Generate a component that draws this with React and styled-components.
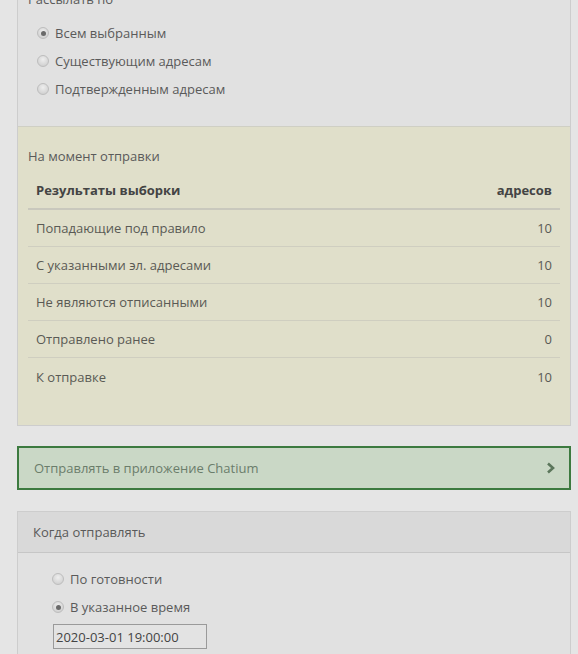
import React from 'react';
import styled, { createGlobalStyle } from 'styled-components';

const GlobalStyle = createGlobalStyle`
    html, body {
        margin: 0;
        padding: 0;
        background: #e5e5e5;
        font-family: "Open Sans", "Liberation Sans", sans-serif;
        font-size: 13px;
        color: #5a5a5a;
        overflow: hidden;
    }
`;

const Page = styled.div`
    width: 578px;
    height: 654px;
    box-sizing: border-box;
    padding: 0 7px 0 17px;
    overflow: hidden;
`;

const Panel = styled.div`
    border: 1px solid #cdcdcd;
    background: #e1e1e1;
    margin-top: ${props => props.top || 0}px;
`;

const Legend = styled.div`
    padding: 0 10px;
    line-height: 20px;
`;

const RadioList = styled.div`
    display: flex;
    flex-direction: column;
    align-items: flex-start;
    gap: 8px;
    padding: ${props => props.pad};
`;

const RadioRow = styled.label`
    display: flex;
    align-items: center;
    gap: 6px;
    line-height: 20px;
`;

const RadioDot = styled.span`
    width: 12px;
    height: 12px;
    border-radius: 50%;
    box-sizing: border-box;
    border: 1px solid #bdbdbd;
    background: radial-gradient(circle at 50% 35%, #eeeeee 0%, #c9c9c9 100%);
    display: flex;
    align-items: center;
    justify-content: center;

    &::after {
        content: '';
        width: 5px;
        height: 5px;
        border-radius: 50%;
        background: #6a6a6a;
        display: ${props => (props.checked ? 'block' : 'none')};
    }
`;

const Summary = styled.div`
    background: #e0dfca;
    border-top: 1px solid #cfcfc4;
    padding: 19px 10px 30px;
`;

const SummaryTitle = styled.div`
    line-height: 20px;
    margin-bottom: 5px;
`;

const Table = styled.div`
    display: flex;
    flex-direction: column;
`;

const Row = styled.div`
    display: flex;
    justify-content: space-between;
    align-items: center;
    box-sizing: border-box;
    height: ${props => (props.head ? 39 : 37)}px;
    padding: 0 8px;
    border-bottom: ${props => (props.head ? '2px solid #c9c8bd' : props.last ? 'none' : '1px solid #cfcec0')};
    font-weight: ${props => (props.head ? 700 : 400)};
    color: ${props => (props.head ? '#444' : '#5a5a55')};
`;

const AppButton = styled.div`
    margin-top: 20px;
    height: 40px;
    border: 2px solid #3c7a3f;
    background: #cad8c6;
    display: flex;
    align-items: center;
    justify-content: space-between;
    padding: 0 14px 0 15px;
    color: #6b7d6b;
`;

const PanelHeader = styled.div`
    background: #d9d9d9;
    border-bottom: 1px solid #c6c6c6;
    height: 40px;
    display: flex;
    align-items: center;
    padding: 0 15px;
`;

const DateInput = styled.input`
    width: 154px;
    height: 25px;
    box-sizing: border-box;
    border: 1px solid #9a9a9a;
    background: #e3e3e3;
    font-family: "Open Sans", "Liberation Sans", sans-serif;
    font-size: 13px;
    color: #444;
    padding: 0 2px;
    margin: -1px 0 0 1px;
    outline: none;
`;

const rows = [
    ['Попадающие под правило', 10],
    ['С указанными эл. адресами', 10],
    ['Не являются отписанными', 10],
    ['Отправлено ранее', 0],
    ['К отправке', 10],
];

const Radio = ({ checked, children }) => (
    <RadioRow>
        <RadioDot checked={checked} />
        {children}
    </RadioRow>
);

const App = () => {
    return (
        <Page>
            <GlobalStyle />
            <Panel top={-12}>
                <Legend>Рассылать по</Legend>
                <RadioList pad="14px 0 27px 19px">
                    <Radio checked>Всем выбранным</Radio>
                    <Radio>Существующим адресам</Radio>
                    <Radio>Подтвержденным адресам</Radio>
                </RadioList>
                <Summary>
                    <SummaryTitle>На момент отправки</SummaryTitle>
                    <Table>
                        <Row head>
                            <span>Результаты выборки</span>
                            <span>адресов</span>
                        </Row>
                        {rows.map(([label, value], i) => (
                            <Row key={label} last={i === rows.length - 1}>
                                <span>{label}</span>
                                <span>{value}</span>
                            </Row>
                        ))}
                    </Table>
                </Summary>
            </Panel>

            <AppButton>
                <span>Отправлять в приложение Chatium</span>
                <svg width="9" height="12" viewBox="0 0 9 12">
                    <polyline points="2,1.5 7,6 2,10.5" fill="none" stroke="#5b765b" strokeWidth="2.6" />
                </svg>
            </AppButton>

            <Panel top={21}>
                <PanelHeader>Когда отправлять</PanelHeader>
                <RadioList pad="16px 0 20px 34px">
                    <Radio>По готовности</Radio>
                    <Radio checked>В указанное время</Radio>
                    <DateInput defaultValue="2020-03-01 19:00:00" />
                </RadioList>
            </Panel>
        </Page>
    );
};

export default App;
